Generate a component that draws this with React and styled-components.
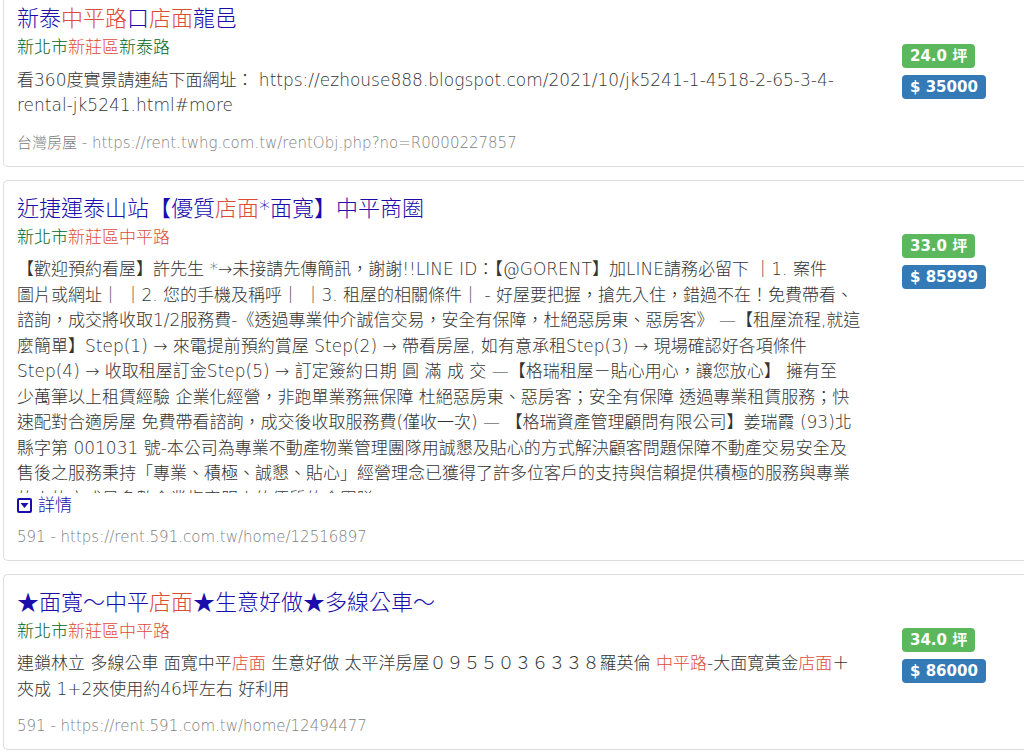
import React, { useState } from 'react';
import styled, { createGlobalStyle } from 'styled-components';

const GlobalStyle = createGlobalStyle`
  * {
    box-sizing: border-box;
  }
  body {
    margin: 0;
    background: #fff;
    color: #333;
    font-family: 'DejaVu Sans', 'Noto Sans CJK TC', sans-serif;
    font-size: 17px;
    line-height: 1.5;
    overflow-x: hidden;
  }
`;

const ResultList = styled.main`
  display: flex;
  flex-direction: column;
  gap: 13px;
  margin: -10px 0 0 3px;
`;

const Card = styled.article`
  display: grid;
  grid-template-columns: minmax(0, 1fr) 122px;
  column-gap: 36px;
  padding: 11px 0 11px 13px;
  border: 1px solid #ddd;
  border-right: 0;
  border-radius: 5px 0 0 5px;
`;

const Title = styled.h3`
  margin: 0;
  font-size: 22px;
  font-weight: 300;
  line-height: 33px;
`;

const TitleLink = styled.a`
  color: #1a0dab;
  text-decoration: none;
`;

const Address = styled.div`
  color: #006621;
  font-weight: 300;
`;

const Description = styled.div`
  margin-top: 7px;
  max-height: ${props => (props.$open ? 'none' : '236px')};
  overflow: hidden;
  font-weight: 300;
  white-space: pre-line;
`;

const Mark = styled.em`
  color: #dd4b39;
  font-style: normal;
`;

const MoreButton = styled.button`
  display: flex;
  align-items: center;
  gap: 6px;
  padding: 0;
  border: 0;
  background: none;
  color: #1a0dab;
  font: inherit;
  font-weight: 300;
  cursor: pointer;
`;

const Source = styled.div`
  margin-top: ${props => (props.$tight ? '7px' : '13px')};
  color: #808080;
  font-size: 15px;
  font-weight: 300;
  line-height: 23px;
`;

const Labels = styled.div`
  display: flex;
  flex-direction: column;
  align-items: flex-start;
  gap: 7px;
  padding-top: 42px;
`;

const Label = styled.span`
  padding: 0 8px;
  border-radius: 4px;
  background: ${props => (props.$kind === 'area' ? '#5cb85c' : '#337ab7')};
  color: #fff;
  font-size: 15px;
  font-weight: 700;
  line-height: 24px;
`;

// words between square brackets are the search hits
const results = [
  {
    id: 'R0000227857',
    title: '新泰[中平路]口[店面]龍邑',
    address: '新北市[新莊區]新泰路',
    text: '看360度實景請連結下面網址： https://ezhouse888.blogspot.com/2021/10/jk5241-1-4518-2-65-3-4-\nrental-jk5241.html#more',
    site: '台灣房屋',
    url: 'https://rent.twhg.com.tw/rentObj.php?no=R0000227857',
    area: '24.0',
    price: '35000',
  },
  {
    id: '12516897',
    title: '近捷運泰山站【優質[店面]*面寬】中平商圈',
    address: '新北市[新莊區中平路]',
    text: `【歡迎預約看屋】許先生 *→未接請先傳簡訊，謝謝!!LINE ID：【@GORENT】加LINE請務必留下 ｜1. 案件
圖片或網址｜ ｜2. 您的手機及稱呼｜ ｜3. 租屋的相關條件｜ - 好屋要把握，搶先入住，錯過不在！免費帶看、
諮詢，成交將收取1/2服務費-《透過專業仲介誠信交易，安全有保障，杜絕惡房東、惡房客》 —【租屋流程,就這
麼簡單】Step(1) → 來電提前預約賞屋 Step(2) → 帶看房屋, 如有意承租Step(3) → 現場確認好各項條件
Step(4) → 收取租屋訂金Step(5) → 訂定簽約日期 圓 滿 成 交 —【格瑞租屋－貼心用心，讓您放心】 擁有至
少萬筆以上租賃經驗 企業化經營，非跑單業務無保障 杜絕惡房東、惡房客；安全有保障 透過專業租賃服務；快
速配對合適房屋 免費帶看諮詢，成交後收取服務費(僅收一次) — 【格瑞資產管理顧問有限公司】姜瑞霞 (93)北
縣字第 001031 號-本公司為專業不動產物業管理團隊用誠懇及貼心的方式解決顧客問題保障不動產交易安全及
售後之服務秉持「專業、積極、誠懇、貼心」經營理念已獲得了許多位客戶的支持與信賴提供積極的服務與專業
的人的方式是多數企業指定服人的優質的合團隊`,
    site: '591',
    url: 'https://rent.591.com.tw/home/12516897',
    area: '33.0',
    price: '85999',
    more: true,
  },
  {
    id: '12494477',
    title: '★面寬～中平[店面]★生意好做★多線公車～',
    address: '新北市[新莊區中平路]',
    text: '連鎖林立 多線公車 面寬中平[店面] 生意好做 太平洋房屋０９５５０３６３３８羅英倫 [中平路]-大面寬黃金[店面]＋\n夾成 1+2夾使用約46坪左右 好利用',
    site: '591',
    url: 'https://rent.591.com.tw/home/12494477',
    area: '34.0',
    price: '86000',
  },
];

function Highlight({ children }) {
  return children
    .split(/[[\]]/)
    .map((part, i) => (i % 2 ? <Mark key={i}>{part}</Mark> : part));
}

function DownSquareIcon() {
  return (
    <svg width="15" height="15" viewBox="0 0 15 15" aria-hidden="true">
      <rect x="1" y="1" width="13" height="13" rx="1" fill="none" stroke="#1a0dab" strokeWidth="2" />
      <path d="M3.5 5h8l-4 5z" fill="#1a0dab" />
    </svg>
  );
}

function Result({ item }) {
  const [open, setOpen] = useState(false);

  return (
    <Card>
      <div>
        <Title>
          <TitleLink href={item.url}><Highlight>{item.title}</Highlight></TitleLink>
        </Title>
        <Address><Highlight>{item.address}</Highlight></Address>
        <Description $open={open}><Highlight>{item.text}</Highlight></Description>
        {item.more && (
          <MoreButton type="button" aria-expanded={open} onClick={() => setOpen(!open)}>
            <DownSquareIcon />
            詳情
          </MoreButton>
        )}
        <Source $tight={item.more}>{`${item.site} - ${item.url}`}</Source>
      </div>
      <Labels>
        <Label $kind="area">{`${item.area} 坪`}</Label>
        <Label $kind="price">{`$ ${item.price}`}</Label>
      </Labels>
    </Card>
  );
}

export default function App() {
  return (
    <>
      <GlobalStyle />
      <ResultList>
        {results.map(item => <Result key={item.id} item={item} />)}
      </ResultList>
    </>
  );
}
